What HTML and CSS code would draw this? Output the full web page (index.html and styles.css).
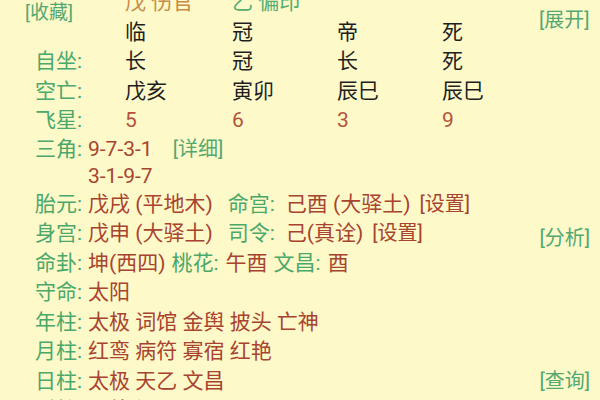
FILE: index.html
```html
<!DOCTYPE html>
<html lang="zh">
<head>
<meta charset="utf-8">
<link rel="stylesheet" href="styles.css">
</head>
<body>
<div class="page">
  <div class="top">
    <div class="link fav">[收藏]</div>
    <div class="cell orange">戊 伤官</div>
    <div class="cell green">乙 偏印</div>
    <div class="cell"></div>
    <div class="cell"></div>
    <div class="link expand">[展开]</div>

    <div class="cell dark">临</div>
    <div class="cell dark">冠</div>
    <div class="cell dark">帝</div>
    <div class="cell dark">死</div>

    <div class="tlabel">自坐:</div>
    <div class="cell dark">长</div>
    <div class="cell dark">冠</div>
    <div class="cell dark">长</div>
    <div class="cell dark">死</div>

    <div class="tlabel">空亡:</div>
    <div class="cell dark">戊亥</div>
    <div class="cell dark">寅卯</div>
    <div class="cell dark">辰巳</div>
    <div class="cell dark">辰巳</div>

    <div class="tlabel">飞星:</div>
    <div class="cell num">5</div>
    <div class="cell num">6</div>
    <div class="cell num">3</div>
    <div class="cell num">9</div>
  </div>

  <div class="rows">
    <div class="row tri">
      <span class="lb">三角:</span>
      <div class="tri-vals">
        <div><span class="val">9-7-3-1</span><span class="link detail">[详细]</span></div>
        <div><span class="val">3-1-9-7</span></div>
      </div>
    </div>
    <div class="row">
      <span class="lb">胎元:</span>
      <span class="val">戊戌 (平地木)</span>
      <span class="ilb">命宫:</span>
      <span class="val">己酉 (大驿土)</span>
      <span class="set">[设置]</span>
    </div>
    <div class="row">
      <span class="lb">身宫:</span>
      <span class="val">戊申 (大驿土)</span>
      <span class="ilb">司令:</span>
      <span class="val">己(真诠)</span>
      <span class="set">[设置]</span>
      <span class="link side analyse">[分析]</span>
    </div>
    <div class="row">
      <span class="lb">命卦:</span>
      <span class="val">坤(西四)</span>
      <span class="ilb tight">桃花:</span>
      <span class="val">午酉</span>
      <span class="ilb tight">文昌:</span>
      <span class="val">酉</span>
    </div>
    <div class="row">
      <span class="lb">守命:</span>
      <span class="val">太阳</span>
    </div>
    <div class="row">
      <span class="lb">年柱:</span>
      <span class="val">太极 词馆 金舆 披头 亡神</span>
    </div>
    <div class="row">
      <span class="lb">月柱:</span>
      <span class="val">红鸾 病符 寡宿 红艳</span>
    </div>
    <div class="row">
      <span class="lb">日柱:</span>
      <span class="val">太极 天乙 文昌</span>
      <span class="link side">[查询]</span>
    </div>
    <div class="row">
      <span class="lb">时柱:</span>
      <span class="val">天德 福星</span>
    </div>
  </div>
</div>
</body>
</html>
```

FILE: styles.css
```css
html, body {
  margin: 0;
  padding: 0;
  background: #fdf9c9;
  overflow: hidden;
}

body {
  width: 600px;
  height: 400px;
  font-family: Roboto, "Noto Sans CJK SC", sans-serif;
  font-size: 21px;
  color: #1e1e1e;
}

.page {
  margin-top: -12px;
}

.top {
  display: grid;
  grid-template-columns: 100px 107px 105px 105px 97px 1fr;
  grid-auto-rows: 29.5px;
  line-height: 29.5px;
  padding-left: 25px;
}

.cell {
  white-space: nowrap;
}

.tlabel {
  grid-column-start: 1;
  padding-left: 10px;
  color: #4aa86a;
}

.dark { color: #1e1e1e; }
.orange { color: #c88c48; }
.green { color: #55ad70; }
.num { color: #b4533a; }

.link {
  color: #53a872;
  font-size: 20px;
  white-space: nowrap;
}

.fav {
  grid-row: span 2;
  align-self: center;
  margin-bottom: 9px;
  font-size: 19px;
  line-height: 22px;
}

.expand {
  grid-row: span 2;
  align-self: center;
  margin-top: 4px;
  line-height: 22px;
}

.rows {
  padding-left: 35px;
  padding-right: 10px;
}

.row {
  display: flex;
  align-items: flex-start;
  height: 29.5px;
  line-height: 29.5px;
  white-space: nowrap;
}

.row.tri {
  height: 54px;
  line-height: 27px;
}

.lb {
  width: 53px;
  flex: none;
  color: #4aa86a;
}

.ilb {
  color: #4aa86a;
  margin-left: 15px;
  margin-right: 11px;
}

.ilb.tight {
  margin-left: 6px;
  margin-right: 7px;
}

.val {
  color: #a8432f;
}

.detail {
  margin-left: 20px;
}

.set {
  color: #a8432f;
  font-size: 20px;
  margin-left: 9px;
}

.side {
  margin-left: auto;
}

.analyse {
  margin-top: 5px;
}
```
